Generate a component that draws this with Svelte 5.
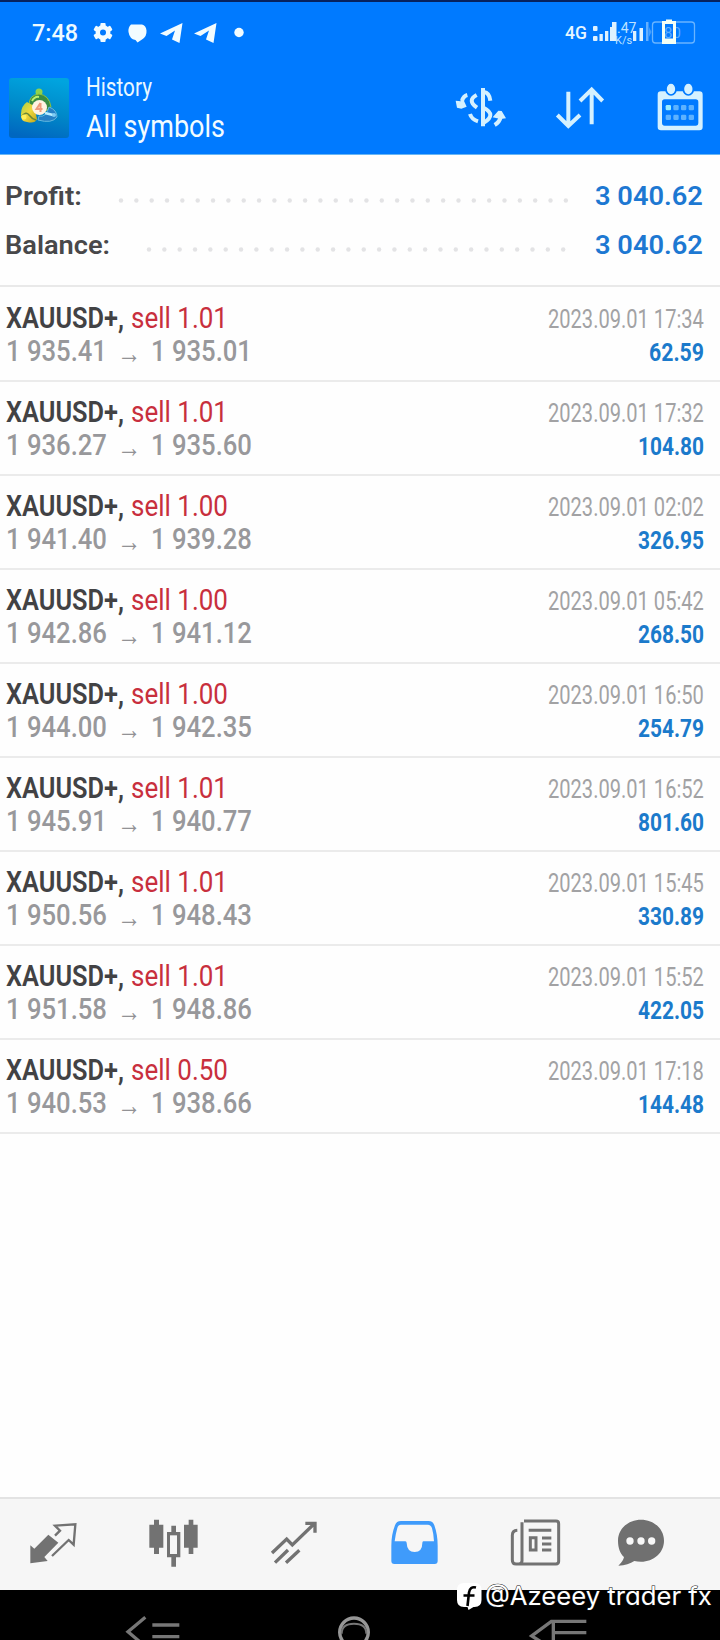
<script>
  const deals = [
    ['1.01', '1 935.41', '1 935.01', '2023.09.01 17:34', '62.59'],
    ['1.01', '1 936.27', '1 935.60', '2023.09.01 17:32', '104.80'],
    ['1.00', '1 941.40', '1 939.28', '2023.09.01 02:02', '326.95'],
    ['1.00', '1 942.86', '1 941.12', '2023.09.01 05:42', '268.50'],
    ['1.00', '1 944.00', '1 942.35', '2023.09.01 16:50', '254.79'],
    ['1.01', '1 945.91', '1 940.77', '2023.09.01 16:52', '801.60'],
    ['1.01', '1 950.56', '1 948.43', '2023.09.01 15:45', '330.89'],
    ['1.01', '1 951.58', '1 948.86', '2023.09.01 15:52', '422.05'],
    ['0.50', '1 940.53', '1 938.66', '2023.09.01 17:18', '144.48']
  ];
  const summary = [
    { label: 'Profit:', width: 77, dots: 30, end: 568 },
    { label: 'Balance:', width: 105, dots: 28, end: 566 }
  ];

  // Condenses a text horizontally to the given width.
  function condense(node, width) {
    const natural = node.getComputedTextLength();
    if (natural > 0) node.setAttribute('transform', `scale(${width / natural} 1)`);
  }
</script>

{#snippet label(text, width, cls, height = 34, base = 28)}
  <svg class="label {cls}" {width} {height}>
    <text x="0" y={base} use:condense={width}>{text}</text>
  </svg>
{/snippet}

<div class="screen">
  <header>
    <div class="status">
      <div class="status-left">
        {@render label('7:48', 46, 'clock', 30, 24.5)}
        <svg width="156" height="30" viewBox="0 0 156 30" fill="#f2fcff">
          <g transform="translate(11 15.5)">
            <circle r="5.2" fill="none" stroke="#f2fcff" stroke-width="4.4" />
            {#each [0, 60, 120, 180, 240, 300] as a}
              <rect x="-2.6" y="-9.6" width="5.2" height="4.4" rx="1" transform="rotate({a})" />
            {/each}
          </g>
          <path d="M39 7.500h11q4 1 4.500 6q.5 6-4.500 9l-4.500 3-2-2.500q-6-1-7-8-.5-5 2.500-7.500z" />
          <path d="M68 16.500 90.500 6 87.500 26 80 22.500 83 13.500 74.500 19z" />
          <path d="M102 16.500 124.500 6 121.500 26 114 22.500 117 13.500 108.500 19z" />
          <circle cx="147" cy="15.500" r="4.700" />
        </svg>
      </div>
      <svg class="signals" width="134" height="30" viewBox="564 17 134 30">
        <text class="net" x="565" y="38.500">4G</text>
        <g fill="#dff2ff">
          <rect x="593" y="26" width="4.500" height="5" rx="1" /><rect x="593" y="36" width="4.500" height="5" rx="1" />
          <rect x="599.500" y="34" width="3.300" height="7" /><rect x="605" y="31" width="3.300" height="10" />
          <rect x="610" y="27" width="3" height="14" /><rect x="612" y="22" width="4.500" height="19" />
          <rect x="633" y="31" width="3.300" height="10" /><rect x="639.500" y="28" width="3.500" height="13" />
          <rect x="646" y="22" width="2.500" height="19" opacity=".45" /><path d="M649 27l2.500 5-2.500 5z" opacity=".3" />
        </g>
        <text class="rate" x="617" y="33">.47</text>
        <text class="unit" x="615" y="44">K/s</text>
        <rect x="652.500" y="22" width="42" height="21" rx="3" fill="none" stroke="#69b4ff" stroke-width="1.300" />
        <text class="level" x="664" y="38">80</text>
        <path d="M663.500 22.500h11v19h-11z" fill="none" stroke="#f4fff4" stroke-width="3" />
        <path d="M662 38.500h14v5.500h-14zM666 19.500h6v3h-6z" fill="#f4fff4" />
      </svg>
    </div>
    <div class="appbar">
      <svg class="logo" width="60" height="60" viewBox="0 0 60 60">
        <defs>
          <linearGradient id="sea" x1="0.600" y1="0" x2="0.400" y2="1">
            <stop offset="0" stop-color="#00a4df" /><stop offset=".55" stop-color="#0088c8" /><stop offset="1" stop-color="#0067c0" />
          </linearGradient>
          <linearGradient id="gold" x1="0" y1="0" x2="1" y2="1">
            <stop offset="0" stop-color="#a6cf47" /><stop offset=".5" stop-color="#f0d83c" /><stop offset="1" stop-color="#bfa51d" />
          </linearGradient>
        </defs>
        <rect width="60" height="60" rx="3" fill="url(#sea)" />
        <circle cx="30" cy="14" r="3.500" fill="#8ed34e" />
        <path d="M20 27q0-10 10-11 10 1 12 13l-8 6H20z" fill="#388c45" stroke="#8fc23c" stroke-width="1" />
        <path d="M23 23q3-5 7-4" stroke="#bdf06d" stroke-width="2" fill="none" />
        <path d="M18 24q-6 4-6 12-1 7 6 8 8 2 10-3l-3-13z" fill="url(#gold)" />
        <path d="M13 38q4-5 7-1t7 5" fill="none" stroke="#6a8838" stroke-width="1.500" />
        <circle cx="15" cy="39" r="2.500" fill="#fff05b" />
        <path d="M30 38q7 2 10-9 8 3 8 10-5 7-19 3z" fill="#2680c6" stroke="#63b8df" stroke-width="1" />
        <path d="M36 35l8 2" stroke="#b9edff" stroke-width="2.500" /><circle cx="45" cy="37" r="2" fill="#7fccf4" />
        <circle cx="30.500" cy="29.500" r="7.500" fill="#fff3e2" />
        <path d="M31.500 25l-4 6h6M31.500 25v9" fill="none" stroke="#ef9b7d" stroke-width="2" />
      </svg>
      <div class="titles">
        {@render label('History', 66, 'sub', 34, 26.500)}
        {@render label('All symbols', 139, 'title', 40, 33.500)}
      </div>
      <div class="actions">
        <svg width="52" height="44" viewBox="284 258 156 132" fill="none" stroke="#d5f1ff" stroke-width="12">
          <path d="M368 264V379M371 276q16 2 19 26M371 324q38 20 0 44M349 285q-30 16 1 38M329 342q5 16 24 22M321 285q-12 3-16 18M403 375q15-9 18-24" />
          <path d="M286 302l15 2 6-10 12 26-16 6-13-3zM397 352l17-20 10 1 13 22-17 2z" fill="#d5f1ff" stroke="none" />
        </svg>
        <svg width="48" height="44" viewBox="588 258 144 132" fill="none" stroke="#d5f1ff" stroke-width="12">
          <path d="M625 275V378M592 345l33 33 35-33M695 373V270M660 303l35-34 33 34" />
        </svg>
        <svg width="48" height="48" viewBox="888 250 144 144">
          <path fill="#d5f1ff" fill-rule="evenodd" d="M903 275h115q10 0 10 10v97q0 10-10 10H903q-10 0-10-10v-97q0-10 10-10zM914 299q-8 0-8 8v62q0 9 8 9h93q8 0 8-9v-62q0-8-8-8z" />
          <g fill="#d5f1ff" stroke="#007aff" stroke-width="5"><ellipse cx="933" cy="268" rx="15" ry="18" /><ellipse cx="985" cy="268" rx="15" ry="18" /></g>
          {#each [0, 1, 2, 3] as c}
            <rect x={917 + c * 23} y="316" width="16" height="16" rx="4" fill={c ? '#5db2ff' : '#9cedff'} />
            <rect x={917 + c * 23} y="345" width="16" height="16" rx="4" fill="#5db2ff" />
          {/each}
        </svg>
      </div>
    </div>
  </header>

  <section class="summary">
    {#each summary as s}
      <div class="total">
        {@render label(s.label, s.width, 'dark', 34, 27)}
        <svg class="leader" width={s.dots * 15.340 - 11} height="34">
          {#each Array(s.dots) as _, i}
            <circle cx={2 + i * 15.340} cy="22.500" r="2.200" fill="#e3e3e5" />
          {/each}
        </svg>
        <div style:width="{704 - s.end}px" class="amount">{@render label('3 040.62', 108, 'sum', 34, 27)}</div>
      </div>
    {/each}
  </section>

  <main>
    {#each deals as [lot, open, close, date, profit]}
      <article>
        <div>
          <div class="line">
            {@render label('XAUUSD+,', 118, 'symbol')}
            {@render label('sell ' + lot, 97, 'sell')}
          </div>
          <div class="line prices">
            {@render label(open, 101, 'price', 34, 27.200)}
            {@render label('→', 24, 'arrow', 34, 29)}
            {@render label(close, 101, 'price', 34, 27.200)}
          </div>
        </div>
        <div class="right">
          {@render label(date, 156, 'date', 34, 28.500)}
          {@render label(profit, profit.length === 5 ? 55 : 66, 'profit', 34, 27.300)}
        </div>
      </article>
    {/each}
  </main>

  <nav>
    <svg width="50" height="50" viewBox="85 85 150 150" fill="#727272">
      <path d="M92 167l12 10 42-42 30 24-42 43 10 12-52 7z" />
      <path d="M157 199l50-48 15 14 5-61-61 4 15 15-15 15" fill="none" stroke="#727272" stroke-width="7" />
    </svg>
    <svg width="50" height="50" viewBox="447 85 150 150" fill="#727272">
      <path d="M462 90h15v15h13v69h-13v19h-15v-19h-14v-69h14zM566 90h14v15h13v69h-13v19h-14v-19h-14v-69h14zM514 108h14v19h13v76h-13v28h-14v-28h-13v-76h13z" />
      <path d="M510 137h21v56h-21z" fill="#f6f6f6" />
    </svg>
    <svg width="50" height="50" viewBox="808 85 150 150" fill="none" stroke="#727272" stroke-width="10">
      <path d="M817 190l44-42 17 18 68-66M917 101h29v28M826 219l39-38M859 219l40-37" />
    </svg>
    <svg width="50" height="50" viewBox="91 85 150 150">
      <path d="M124 94h82q14 0 18 13 10 28 10 61v46q0 9-9 9H104q-9 0-9-9v-46q0-33 11-61 4-13 18-13z" fill="#3f9bfb" />
      <path d="M124 105h80q10 0 13 11 5 17 6 39h-32q-3 0-3 5 0 27-23 27t-24-27q0-5-4-5h-32q3-23 8-40 3-10 11-10z" fill="#f6f6f6" />
    </svg>
    <svg width="50" height="50" viewBox="451 85 150 150" fill="none" stroke="#727272" stroke-width="9">
      <path d="M493 94h96q8 0 8 8v113q0 8-8 8H469q-11 0-11-12v-74q0-14 15-15M487 98v115q0 10-10 10M507 122h68M547 145h28M547 163h28M547 181h28M512 144h17v37h-17z" />
    </svg>
    <svg class="chat" width="50" height="50" viewBox="769 85 150 150">
      <path d="M844 90c38 0 69 27 69 63s-31 63-69 63q-11 0-20-2-18 12-48 14 15-14 17-26c-12-10-18-29-18-49 0-36 31-63 69-63z" fill="#707070" />
      <g fill="#f8f8f8"><circle cx="811" cy="154" r="11" /><circle cx="844" cy="154" r="11" /><circle cx="876" cy="154" r="11" /></g>
    </svg>
  </nav>

  <footer>
    <svg width="720" height="50" viewBox="0 300 2160 150" fill="none" stroke="#777" stroke-width="10">
      <path d="M436 382l-52 43 42 36M457 405h81M457 440h81" />
      <path d="M1759 394h-105l-59 44 45 28M1660 394v65M1660 428h99" />
      <circle cx="1062" cy="427" r="43" stroke="#969696" stroke-width="10" />
      <path d="M1025 431q0-30 37-30t37 30" stroke="#777" stroke-width="6" />
    </svg>
    <div class="credit">
      <svg width="25" height="29" viewBox="0 0 25 29">
        <path d="M7 1h11q6.500 0 6.500 7v10q0 7-7 7h-1l-5 3-1-3H7q-7 0-7-7V8q0-7 7-7z" fill="#fff" />
        <path d="M19 5.500q-6-1.500-7 5L10.500 24M6.500 13.500h11" fill="none" stroke="#000" stroke-width="2.600" />
      </svg>
      {@render label('@Azeeey trader fx', 227, 'handle', 34, 25)}
    </div>
  </footer>
</div>

<style>
  :global(body) { margin: 0; background: #fefefe; }
  .screen { width: 720px; height: 1640px; display: flex; flex-direction: column; background: #fefefe; font-family: Roboto, "Liberation Sans", sans-serif; overflow: hidden; }
  svg { display: block; flex: none; overflow: visible; }
  header { box-sizing: border-box; height: 155px; background: #007aff; border-top: 2px solid #06215e; border-bottom: 1px solid #68b6f4; flex: none; }
  .status { height: 62px; display: flex; justify-content: space-between; padding: 15px 22px 0 32px; box-sizing: border-box; }
  .status-left { display: flex; gap: 14px; }
  .clock { font-size: 23px; fill: #eefaff; font-weight: 500; }
  .net { font-size: 17.500px; font-weight: 500; fill: #e6f6ff; }
  .rate { font-size: 14px; fill: #bfe3ff; }
  .unit { font-size: 11px; fill: #bfe3ff; }
  .level { font-size: 15px; fill: #5cacff; }
  .appbar { display: flex; padding: 6px 16px 0 9px; }
  .logo { margin-top: 8px; }
  .titles { margin-left: 16.500px; }
  .sub { font-size: 26px; fill: #e9f8ff; }
  .title { font-size: 32px; fill: #f2fcff; font-weight: 450; }
  .actions { margin-left: auto; display: flex; align-items: flex-start; padding-top: 16px; }
  .actions svg:nth-child(2) { margin-left: 49px; }
  .actions svg:nth-child(3) { margin: -3px 0 0 52px; }
  .summary { height: 130px; border-bottom: 2px solid #e9e9e9; margin-bottom: 1px; flex: none; display: flex; flex-direction: column; gap: 15.200px; }
  .summary::before { content: ""; height: 7.800px; }
  .total { display: flex; padding-left: 5px; height: 34px; }
  .leader { margin-left: auto; }
  .amount { margin-right: 17px; display: flex; justify-content: flex-end; margin-left: -1px; }
  .dark { font-size: 26px; font-weight: 600; fill: #48484a; }
  .sum { font-size: 26px; font-weight: 600; fill: #1d78d2; }
  main { flex: 1; }
  article { box-sizing: border-box; height: 94px; padding: 12px 16px 0 5.500px; border-bottom: 2px solid #ebebeb; display: flex; justify-content: space-between; }
  .line { display: flex; gap: 7.500px; }
  .prices { gap: 10px; }
  .symbol { font-size: 29.500px; font-weight: 600; fill: #424244; }
  .sell { font-size: 30px; fill: #c82f3d; }
  .price { font-size: 29px; font-weight: 500; fill: #98989b; }
  .arrow { font-family: "Liberation Sans", sans-serif; font-size: 28px; fill: #929295; }
  .right { display: flex; flex-direction: column; align-items: flex-end; }
  .date { font-size: 25.500px; fill: #a2a2a4; }
  .profit { font-size: 25.500px; font-weight: 700; fill: #1b7acb; }
  nav { box-sizing: border-box; height: 93px; flex: none; border-top: 2px solid #e3e3e3; background: #f6f6f6; display: flex; gap: 70.500px; padding: 19.300px 0 0 28.300px; }
  .chat { margin-left: -15px; }
  footer { height: 50px; background: #000; flex: none; position: relative; }
  .credit { position: absolute; left: 457px; top: -8px; display: flex; gap: 3px; }
  .handle { margin-top: -2px; font-family: Inter, sans-serif; font-size: 25px; font-weight: 400; fill: #fff; font-feature-settings: "cv11" 1; paint-order: stroke; stroke: #111; stroke-width: 1px; }
</style>
